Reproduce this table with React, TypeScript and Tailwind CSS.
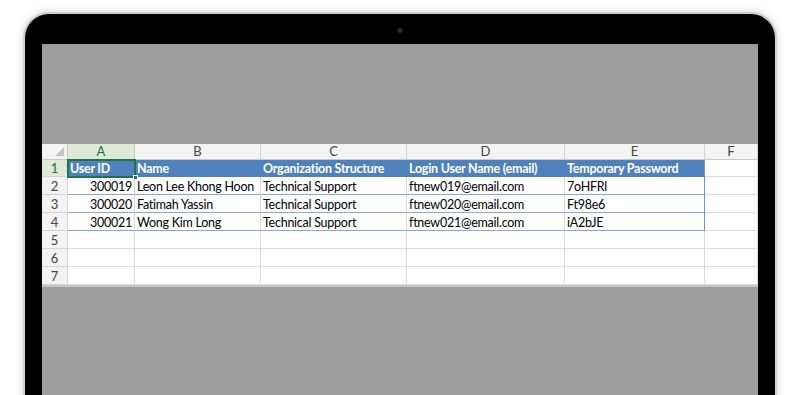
import React from 'react'

const cols = ['A', 'B', 'C', 'D', 'E', 'F']

const headers = ['User ID', 'Name', 'Organization Structure', 'Login User Name (email)', 'Temporary Password']

const users = [
  { id: '300019', name: 'Leon Lee Khong Hoon', org: 'Technical Support', email: 'ftnew019@email.com', pass: '7oHFRl' },
  { id: '300020', name: 'Fatimah Yassin', org: 'Technical Support', email: 'ftnew020@email.com', pass: 'Ft98e6' },
  { id: '300021', name: 'Wong Kim Long', org: 'Technical Support', email: 'ftnew021@email.com', pass: 'iA2bJE' }
]

const RowHead = ({ n, active }: { n: number; active?: boolean }) => (
  <div
    className={`flex items-center justify-center pt-[1px] text-[13px] leading-[15px] border-r border-b border-[#d4d4d4] ${active ? 'bg-[#dfe9d8] text-[#217346]' : 'bg-[#f3f3f3] text-[#444]'}`}
  >
    {n}
  </div>
)

const Cell = ({ children, className = '' }: { children?: React.ReactNode; className?: string }) => (
  <div className={`flex items-center pt-[1px] px-[2px] leading-[15px] tracking-[-0.25px] whitespace-nowrap overflow-hidden border-r border-b border-[#dadada] ${className}`}>
    {children}
  </div>
)

const Sheet = () => {
  return (
    <div
      className="relative grid grid-cols-[26px_67px_126px_146px_158px_140px_53px] grid-rows-[16px_17px_18px_18px_18px_18px_18px_18px] bg-white text-[12.5px] text-black border-b-2 border-[#c6c6c6]"
      style={{ fontFamily: 'Lato, "Open Sans", sans-serif' }}
    >
      {/* corner */}
      <div className="relative bg-[#f3f3f3] border-r border-b border-[#c8c8c8]">
        <div className="absolute right-[3px] bottom-[3px] w-0 h-0 border-l-[9px] border-l-transparent border-b-[9px] border-b-[#c4c4c4]" />
      </div>
      {cols.map((c) => (
        <div
          key={c}
          className={`flex items-center justify-center border-r border-b text-[13px] leading-[15px] ${c === 'A' ? 'bg-[#dfe9d8] text-[#217346] border-b-[#9fc59a] border-r-[#c8c8c8]' : 'bg-[#f3f3f3] text-[#444] border-[#d4d4d4] border-b-[#c8c8c8]'}`}
        >
          {c}
        </div>
      ))}

      {/* row 1 */}
      <RowHead n={1} active />
      {headers.map((h, i) => (
        <Cell key={h} className={`bg-[#4f81bd] text-white font-bold border-r-[#4f81bd] border-b-[#4f81bd] ${i === 4 ? 'border-r-[#6f93c7]' : ''}`}>
          {h}
        </Cell>
      ))}
      <Cell />

      {users.map((u, r) => (
        <React.Fragment key={u.id}>
          <RowHead n={r + 2} />
          <Cell className="justify-end border-b-[#89a8d3]">{u.id}</Cell>
          <Cell className="border-b-[#89a8d3]">{u.name}</Cell>
          <Cell className="border-b-[#89a8d3]">{u.org}</Cell>
          <Cell className="border-b-[#89a8d3]">{u.email}</Cell>
          <Cell className="border-b-[#89a8d3] border-r-[#6f93c7]">{u.pass}</Cell>
          <Cell />
        </React.Fragment>
      ))}

      {[5, 6, 7].map((n) => (
        <React.Fragment key={n}>
          <RowHead n={n} />
          <Cell />
          <Cell />
          <Cell />
          <Cell />
          <Cell />
          <Cell />
        </React.Fragment>
      ))}

      {/* selected cell A1 */}
      <div className="absolute left-[25px] top-[15px] w-[69px] h-[19px] border-2 border-[#217346] pointer-events-none">
        <div className="absolute -right-[4px] -bottom-[4px] w-[5px] h-[5px] bg-[#217346] border border-white" />
      </div>
    </div>
  )
}

export default function App() {
  return (
    <div className="w-[800px] h-[395px] bg-white overflow-hidden pt-[12px] px-[23px]">
      <div className="relative h-[400px] rounded-t-[26px] bg-black border-2 border-b-0 border-[#cfcfcf] shadow-[0_0_8px_rgba(0,0,0,0.18)] pt-[30px] px-[17px]">
        {/* camera */}
        <div className="absolute left-1/2 top-[14px] -translate-x-1/2 w-[5px] h-[5px] rounded-full bg-[#2e2e2e]" />
        <div className="h-full bg-[#9e9e9e] pt-[100px]">
          <Sheet />
        </div>
      </div>
    </div>
  )
}
